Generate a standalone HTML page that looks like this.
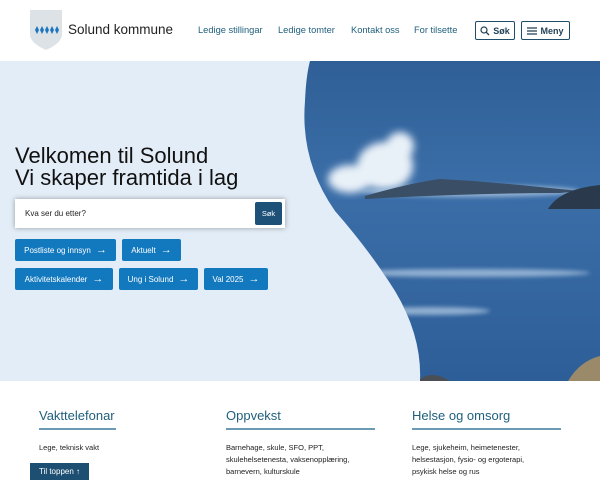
<!DOCTYPE html>
<html><head><meta charset="utf-8"><style>
*{margin:0;padding:0;box-sizing:border-box}
body{width:600px;height:480px;overflow:hidden;background:#fff;font-family:"Liberation Sans",sans-serif;position:relative}
.hdr{position:absolute;top:0;left:0;width:600px;height:61px;background:#fff}
.brand{position:absolute;left:68px;top:22px;font-size:13.5px;color:#222}
.nav{position:absolute;top:25px;font-size:9.3px;color:#1f5f7d}
.btn{position:absolute;top:21px;height:19px;border:1px solid #1f4e6b;border-radius:2px;font-size:9px;font-weight:bold;color:#1f3f55;display:flex;align-items:center;justify-content:center;gap:3px}
.hero{position:absolute;top:61px;left:0;width:600px;height:320px;background:#e3edf7;overflow:hidden}
h1{position:absolute;left:15px;font-weight:normal;font-size:22px;line-height:22px;color:#111}
.search{position:absolute;left:15px;width:270px;height:29px;background:#fff;box-shadow:0 0 5px rgba(0,0,0,.35)}
.search span{position:absolute;left:10px;top:10px;font-size:8px;color:#222}
.search b{position:absolute;right:3px;top:3px;width:27px;height:23px;background:#1d5178;border-radius:2px;color:#fff;font-size:7.5px;font-weight:normal;display:flex;align-items:center;justify-content:center}
.q{position:absolute;height:22px;background:#1279bf;border-radius:2px;color:#fff;font-size:8px;display:flex;align-items:center;justify-content:center;gap:5px}
.q span{font-size:11px;line-height:8px}
.f{position:absolute;top:408px;font-size:13px;color:#1f5f7d}
.f i{position:absolute;left:0;top:20px;height:2px;background:#6b9bb4}
.t{position:absolute;font-size:7.5px;line-height:12px;color:#222}
</style></head><body>
<div class="hdr">
<svg style="position:absolute;left:30px;top:10px" width="32" height="40" viewBox="0 0 32 40"><path d="M0 0H32V24Q32 33 16 40Q0 33 0 24Z" fill="#dde2e6"/>
<g fill="#1b76bf"><path d="M5 20l2-4 2 4-2 4z"/><path d="M10 20l2-4 2 4-2 4z"/><path d="M15 20l2-4 2 4-2 4z"/><path d="M20 20l2-4 2 4-2 4z"/><path d="M25 20l2-4 2 4-2 4z"/></g></svg>
<div class="brand">Solund kommune</div>
<div class="nav" style="left:198px">Ledige stillingar</div>
<div class="nav" style="left:278px">Ledige tomter</div>
<div class="nav" style="left:351px">Kontakt oss</div>
<div class="nav" style="left:414px">For tilsette</div>
<div class="btn" style="left:475px;width:40px"><svg width="10" height="10" viewBox="0 0 10 10"><circle cx="4" cy="4" r="3" fill="none" stroke="#1f3f55" stroke-width="1.2"/><path d="M6.2 6.2L9 9" stroke="#1f3f55" stroke-width="1.3"/></svg>Søk</div>
<div class="btn" style="left:521px;width:49px"><svg width="10" height="8" viewBox="0 0 10 8"><path d="M0 1H10M0 4H10M0 7H10" stroke="#1f3f55" stroke-width="1.2"/></svg>Meny</div>
</div>
<div class="hero">
<svg style="position:absolute;left:0;top:0" width="600" height="320" viewBox="0 0 600 320">
<defs><linearGradient id="s" x1="0" y1="0" x2="0" y2="1"><stop offset="0" stop-color="#2f5f96"/><stop offset=".4" stop-color="#3b6ea8"/><stop offset="1" stop-color="#2e5e98"/></linearGradient>
<filter id="b"><feGaussianBlur stdDeviation="4"/></filter><filter id="b2"><feGaussianBlur stdDeviation="2"/></filter>
<clipPath id="c"><path d="M310 0H600V320H420Q422 275 395 230Q370 190 335 150Q300 100 305 40Q306 15 310 0Z"/></clipPath></defs>
<path d="M310 0H600V320H420Q422 275 395 230Q370 190 335 150Q300 100 305 40Q306 15 310 0Z" fill="url(#s)"/>
<g clip-path="url(#c)">
<g filter="url(#b)" fill="#e8f0f8"><ellipse cx="385" cy="105" rx="28" ry="24"/><ellipse cx="350" cy="118" rx="22" ry="14"/><ellipse cx="400" cy="85" rx="14" ry="14"/></g>
<g filter="url(#b2)" fill="#a9c3de" opacity=".8"><ellipse cx="470" cy="130" rx="110" ry="6"/><ellipse cx="470" cy="212" rx="120" ry="4"/><ellipse cx="430" cy="250" rx="60" ry="4"/></g>
<path d="M365 135Q410 122 440 118Q480 120 520 124Q560 128 580 130L560 132Q470 132 365 138Z" fill="#3a4e66"/>
<path d="M548 148Q560 128 600 124V148Z" fill="#2a3a4c"/>
<path d="M568 320Q580 300 600 295V320Z" fill="#9a8a6a"/>
<path d="M418 320Q430 308 450 320Z" fill="#4a4f55"/>
</g>
</svg>
<h1 style="top:84px">Velkomen til Solund<br>Vi skaper framtida i lag</h1>
<div class="search" style="top:138px"><span>Kva ser du etter?</span><b>Søk</b></div>
<div class="q" style="left:15px;top:178px;width:101px">Postliste og innsyn <span>→</span></div>
<div class="q" style="left:122px;top:178px;width:59px">Aktuelt <span>→</span></div>
<div class="q" style="left:15px;top:207px;width:98px">Aktivitetskalender <span>→</span></div>
<div class="q" style="left:119px;top:207px;width:79px">Ung i Solund <span>→</span></div>
<div class="q" style="left:204px;top:207px;width:64px">Val 2025 <span>→</span></div>
</div>
<div class="f" style="left:39px">Vakttelefonar<i style="width:77px"></i></div>
<div class="f" style="left:226px">Oppvekst<i style="width:149px"></i></div>
<div class="f" style="left:412px">Helse og omsorg<i style="width:149px"></i></div>
<div class="t" style="left:39px;top:442px">Lege, teknisk vakt</div>
<div class="t" style="left:226px;top:442px">Barnehage, skule, SFO, PPT,<br>skulehelsetenesta, vaksenopplæring,<br>barnevern, kulturskule</div>
<div class="t" style="left:412px;top:442px">Lege, sjukeheim, heimetenester,<br>helsestasjon, fysio- og ergoterapi,<br>psykisk helse og rus</div>
<div style="position:absolute;left:30px;top:463px;width:59px;height:17px;background:#1d4f72;color:#fff;font-size:8px;display:flex;align-items:center;justify-content:center">Til toppen ↑</div>
</body></html>
